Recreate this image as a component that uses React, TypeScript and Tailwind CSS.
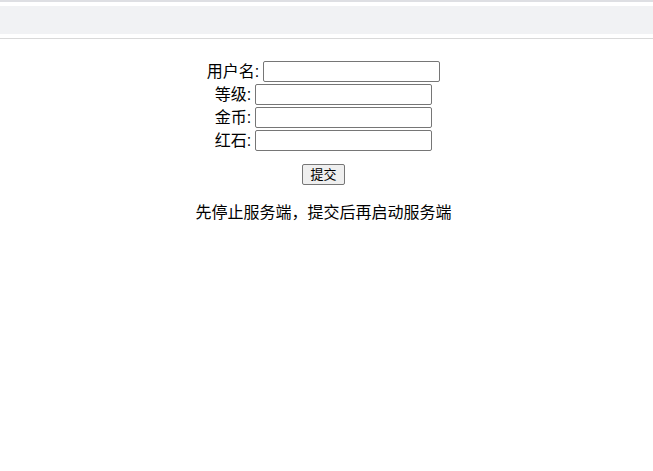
import React from "react";

const fields = [
  { label: "用户名", name: "username" },
  { label: "等级", name: "level" },
  { label: "金币", name: "gold" },
  { label: "红石", name: "redstone" },
];

const App = () => {
  return (
    <div
      className="min-h-[471px] bg-white text-black"
      style={{ fontFamily: '"Liberation Sans", "Noto Sans CJK SC", sans-serif' }}
    >
      {/* browser-like toolbar strip */}
      <div className="border-t-2 border-[#dedfe3] pt-1">
        <div className="h-[28px] bg-[#f1f2f4]" />
        <div className="h-[4px] border-b border-[#d9d9d9] box-content" />
      </div>

      <form className="flex flex-col items-center pt-[21px] pr-[6px] text-[16px]">
        {fields.map((f) => (
          <div key={f.name} className="flex h-[23px] items-center">
            <label htmlFor={f.name} className="leading-[23px]">
              {f.label}:
            </label>
            <input
              id={f.name}
              type="text"
              className="ml-[4px] h-[21px] w-[177px] rounded-[2px] border border-[#767676] bg-white px-[2px] text-[13px]"
            />
          </div>
        ))}
        <button
          type="button"
          className="mt-[12px] h-[21px] rounded-[2px] border border-[#767676] bg-[#efefef] px-[7px] text-[13px] leading-none"
        >
          提交
        </button>
        <p className="mt-[17px] leading-[22px]">
          先停止服务端，提交后再启动服务端
        </p>
      </form>
    </div>
  );
};

export default App;
